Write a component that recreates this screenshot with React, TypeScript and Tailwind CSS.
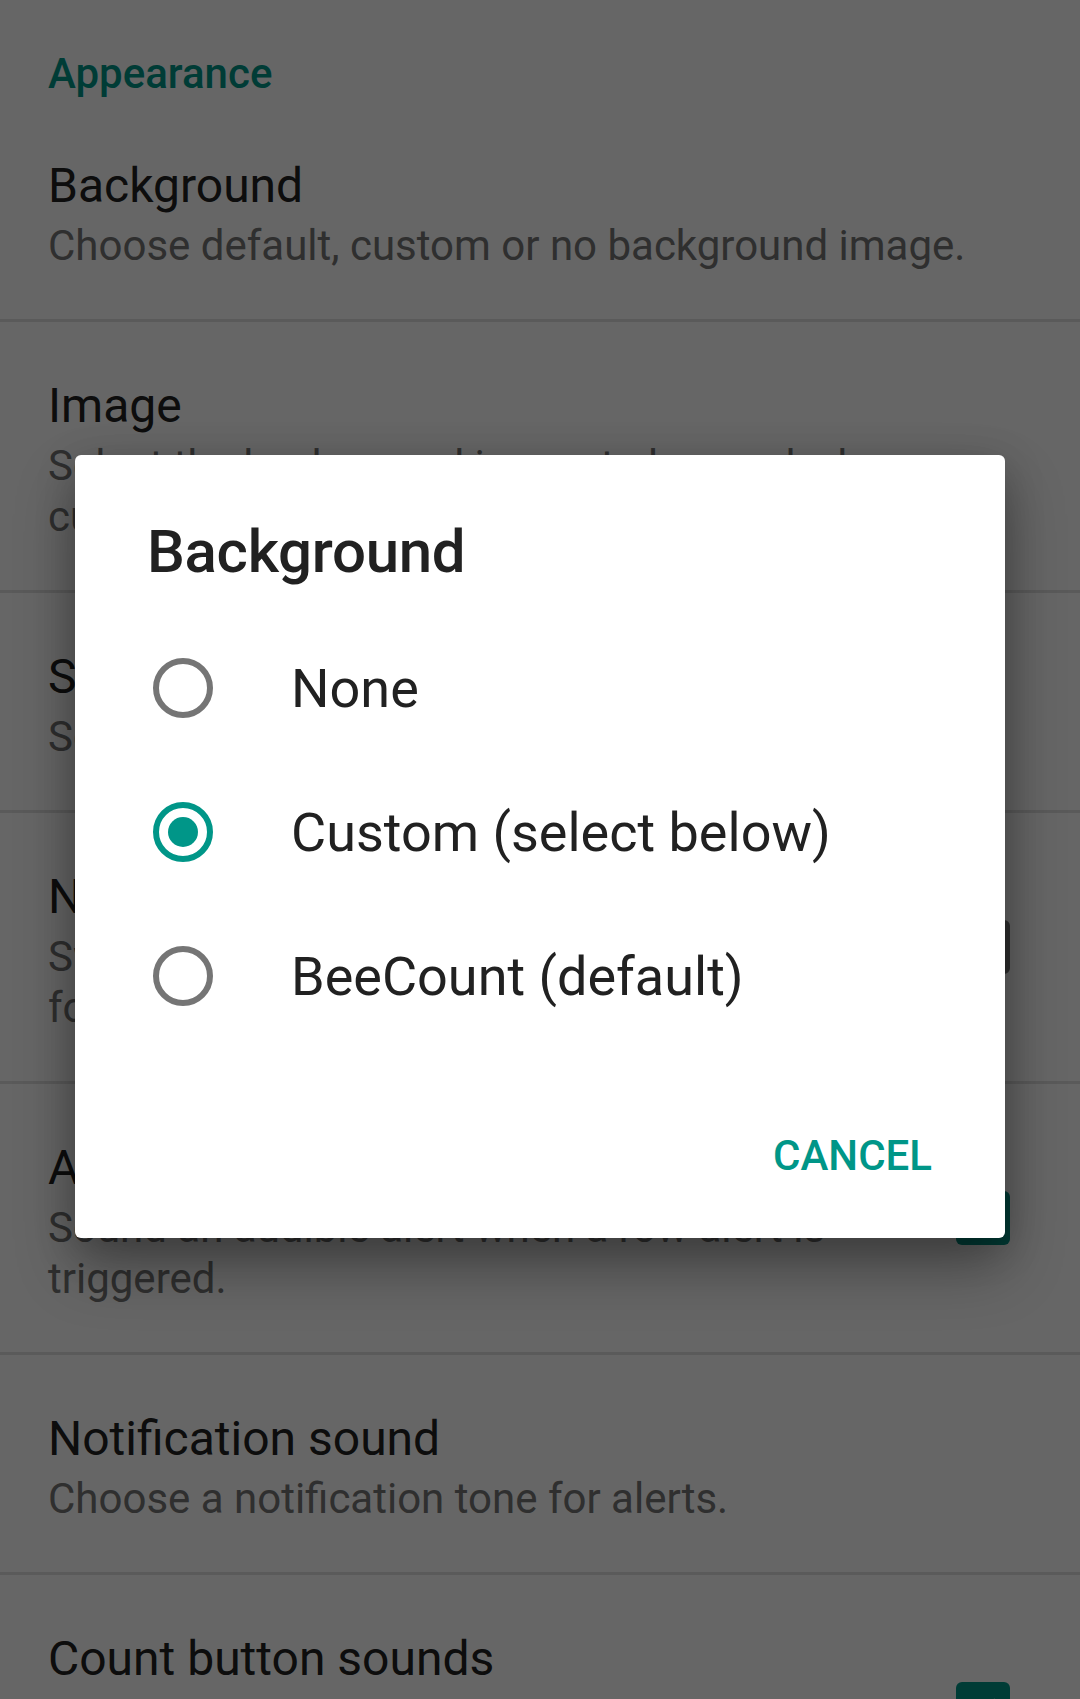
import React from "react";

type Pref = {
  title: string;
  summary: string[];
  checkbox?: "on" | "off";
};

const prefs: Pref[] = [
  { title: "Background", summary: ["Choose default, custom or no background image."] },
  {
    title: "Image",
    summary: ["Select the background image to be used when", "custom is selected."],
  },
  { title: "Screen orientation", summary: ["Set the screen orientation."] },
  {
    title: "No screen lock",
    summary: ["Switch off the screen lock while counting", "for better handling."],
    checkbox: "off",
  },
  {
    title: "Alert sound",
    summary: ["Sound an audible alert when a row alert is", "triggered."],
    checkbox: "on",
  },
  { title: "Notification sound", summary: ["Choose a notification tone for alerts."] },
  {
    title: "Count button sounds",
    summary: ["Play a sound when a count button is", "pressed."],
    checkbox: "on",
  },
];

function Checkbox({ checked }: { checked: boolean }) {
  if (checked) {
    return (
      <div className="w-[54px] h-[54px] rounded-[6px] bg-[#009688] flex items-center justify-center">
        <svg width="42" height="42" viewBox="0 0 24 24">
          <path d="M4.5 12.5l5 5L19.5 7" fill="none" stroke="#ffffff" strokeWidth="3" />
        </svg>
      </div>
    );
  }
  return <div className="w-[54px] h-[54px] rounded-[6px] border-[6px] border-[#757575]" />;
}

function PrefRow({ pref }: { pref: Pref }) {
  return (
    <div className="flex items-center border-b-[3px] border-[#e0e0e0] pl-[48px] pr-[70px]">
      <div className="flex-1 pt-[56px] pb-[48px]">
        <div className="text-[48px] leading-[56px] text-[#212121]">{pref.title}</div>
        <div className="mt-[6px] text-[42px] leading-[51px] text-[#757575]">
          {pref.summary.map((line) => (
            <div key={line} className="whitespace-nowrap">
              {line}
            </div>
          ))}
        </div>
      </div>
      {pref.checkbox && <Checkbox checked={pref.checkbox === "on"} />}
    </div>
  );
}

function Radio({ checked }: { checked: boolean }) {
  return (
    <div
      className={
        checked
          ? "w-[60px] h-[60px] rounded-full border-[6px] border-[#009688] flex items-center justify-center"
          : "w-[60px] h-[60px] rounded-full border-[6px] border-[#757575]"
      }
    >
      {checked && <div className="w-[30px] h-[30px] rounded-full bg-[#009688]" />}
    </div>
  );
}

const options = [
  { label: "None", checked: false },
  { label: "Custom (select below)", checked: true },
  { label: "BeeCount (default)", checked: false },
];

export default function App() {
  return (
    <div className="relative w-[1080px] h-[1699px] overflow-hidden bg-white font-['Roboto',sans-serif]">
      {/* settings list */}
      <div className="h-[102px] pl-[48px] pt-[49px]">
        <div className="text-[42px] leading-[50px] font-medium text-[#009688]">Appearance</div>
      </div>
      {prefs.map((p) => (
        <PrefRow key={p.title} pref={p} />
      ))}

      {/* scrim */}
      <div className="absolute inset-0 bg-black/60" />

      {/* dialog */}
      <div className="absolute left-[75px] top-[455px] w-[930px] h-[783px] rounded-[6px] bg-white shadow-[0_30px_60px_rgba(0,0,0,0.3),0_10px_40px_rgba(0,0,0,0.2)]">
        <div className="pt-[57px] pl-[72px] text-[60px] leading-[80px] font-medium tracking-[-0.3px] text-[#212121]">
          Background
        </div>
        <div className="mt-[24px]">
          {options.map((o) => (
            <div key={o.label} className="h-[144px] flex items-center pl-[78px]">
              <Radio checked={o.checked} />
              <span className="ml-[78px] text-[54px] text-[#212121]">{o.label}</span>
            </div>
          ))}
        </div>
        <div className="mt-[53px] h-[108px] flex items-center justify-end pr-[73px]">
          <span className="text-[42px] font-medium text-[#009688]">CANCEL</span>
        </div>
      </div>
    </div>
  );
}
